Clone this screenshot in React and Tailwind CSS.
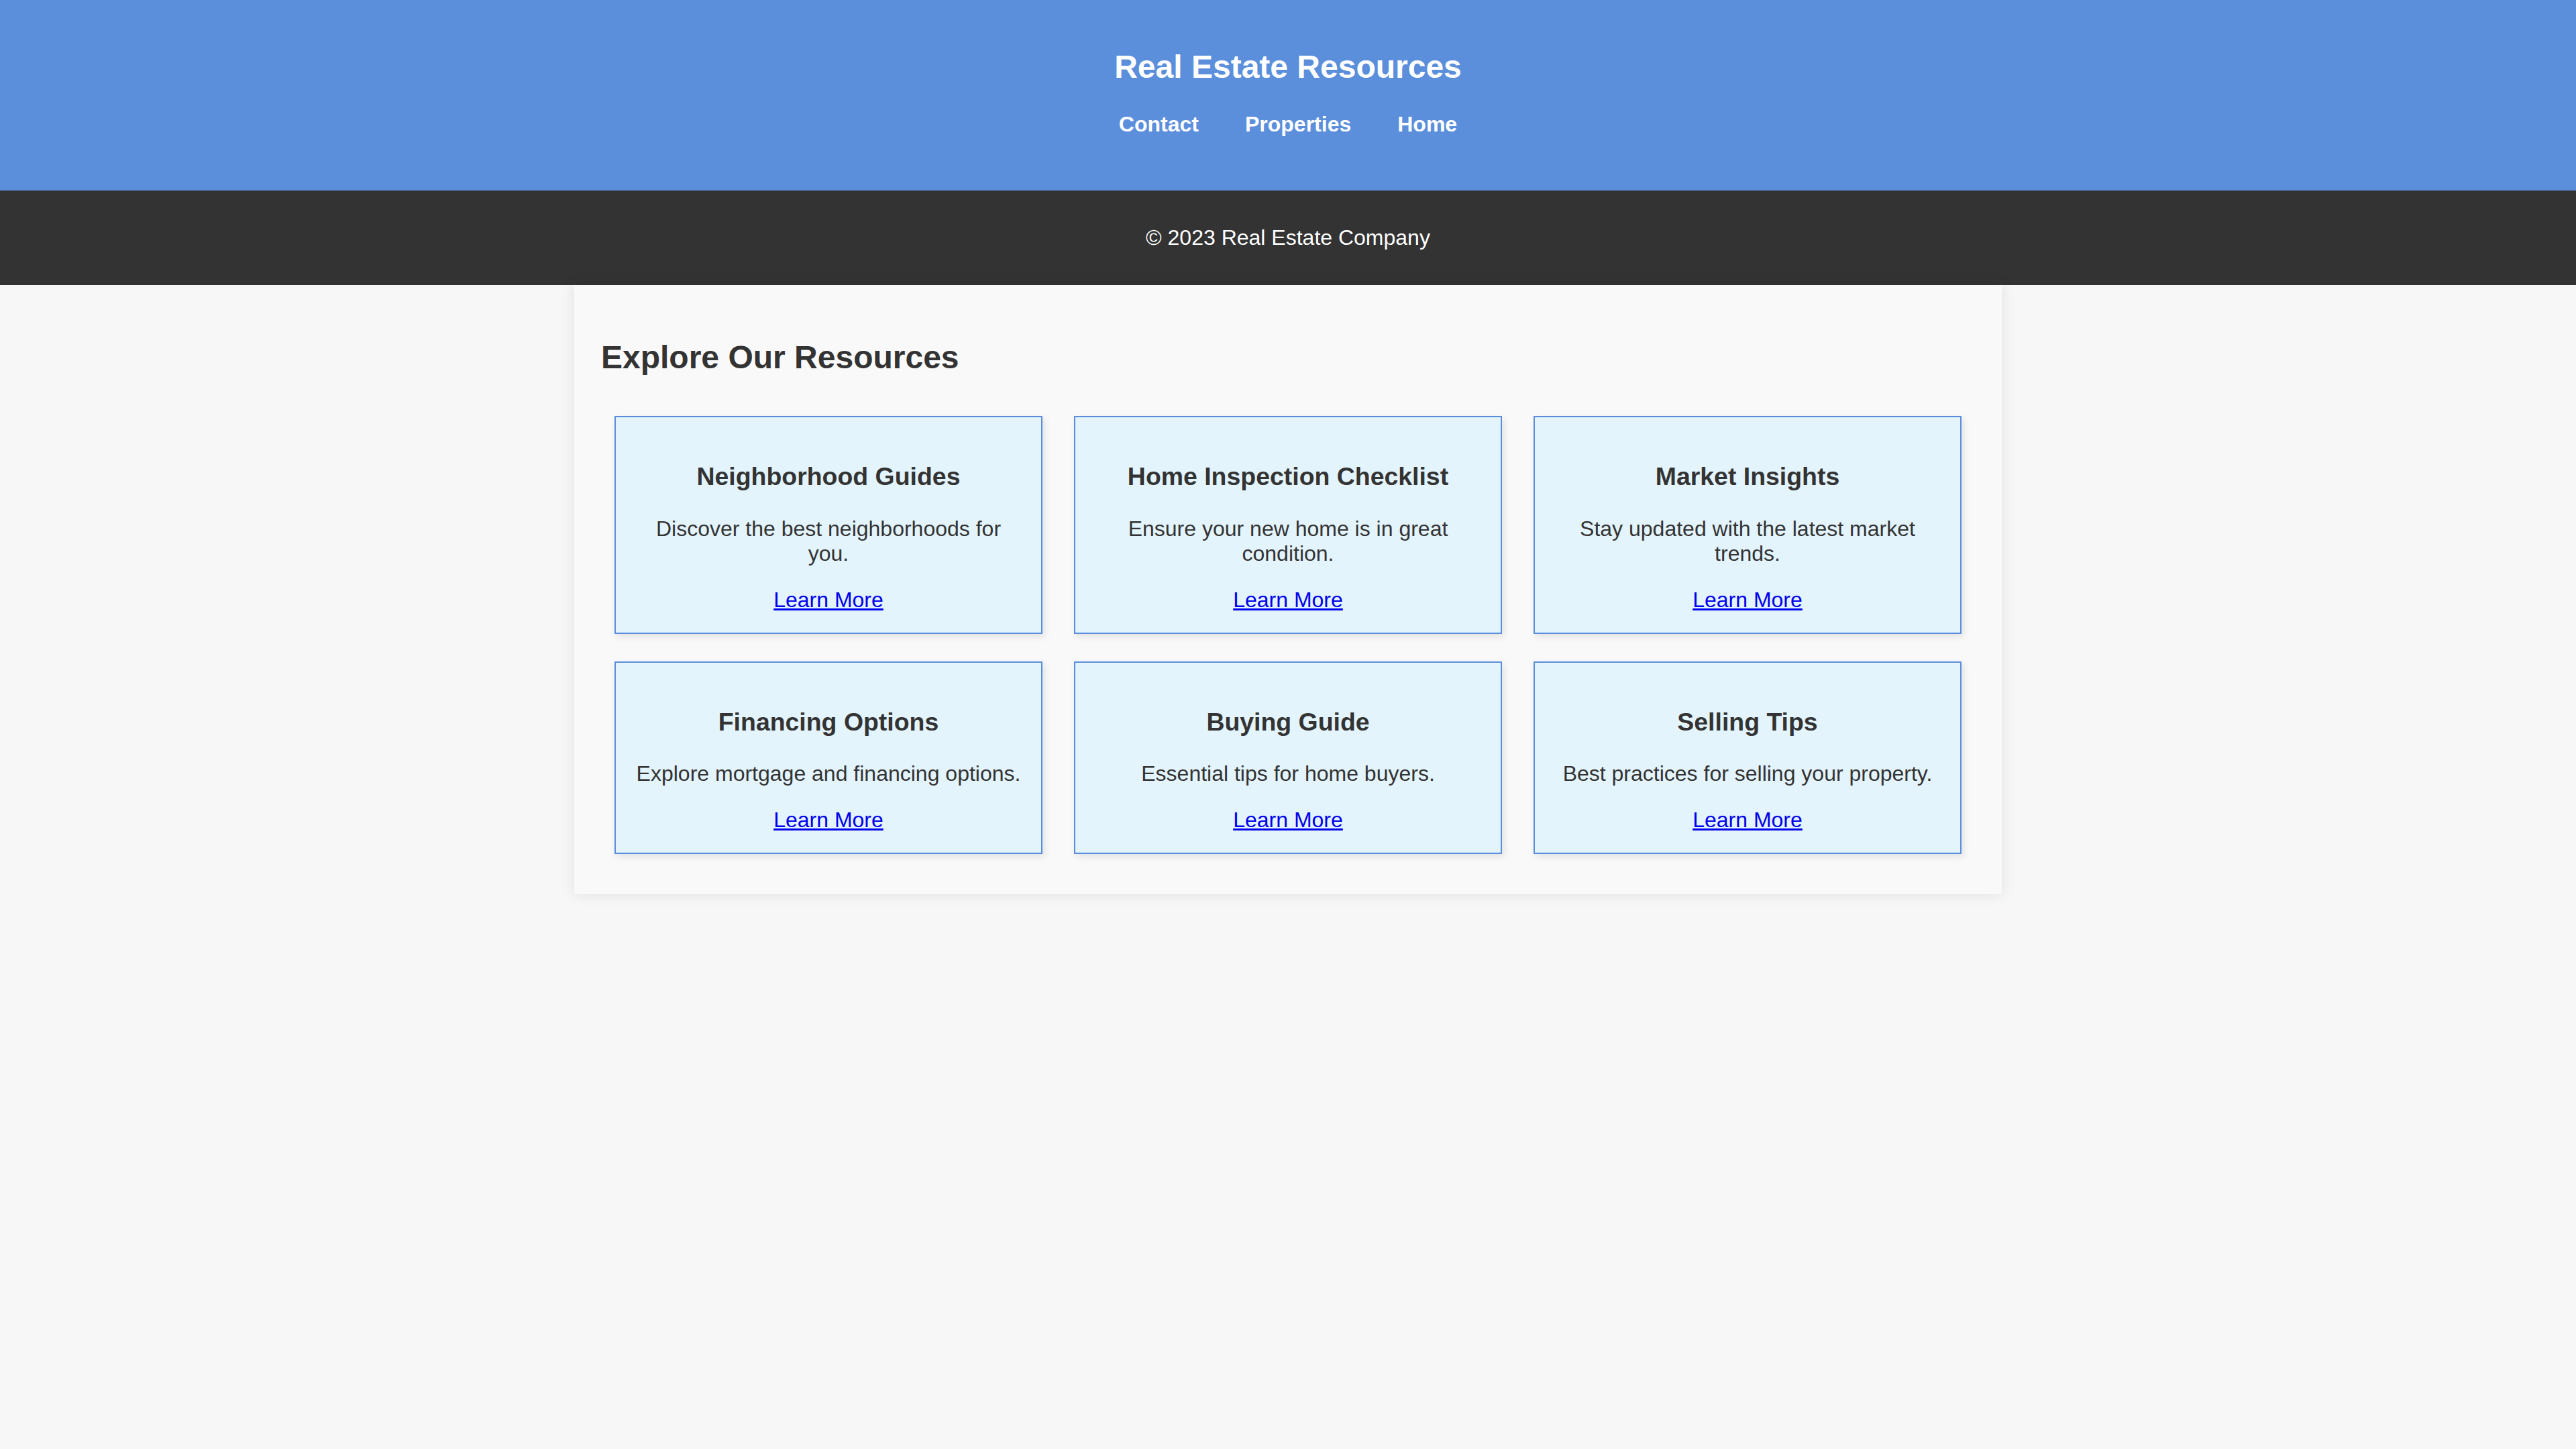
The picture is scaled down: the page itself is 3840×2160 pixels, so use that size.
import React from 'react';

const resources = [
  { title: 'Neighborhood Guides', text: 'Discover the best neighborhoods for you.' },
  { title: 'Home Inspection Checklist', text: 'Ensure your new home is in great condition.' },
  { title: 'Market Insights', text: 'Stay updated with the latest market trends.' },
  { title: 'Financing Options', text: 'Explore mortgage and financing options.' },
  { title: 'Buying Guide', text: 'Essential tips for home buyers.' },
  { title: 'Selling Tips', text: 'Best practices for selling your property.' },
];

const ResourceCard = ({ title, text }) => {
  return (
    <div className="border-2 border-[#5b8fdc] bg-[#e3f4fd] p-[30px] text-center shadow-[3px_4px_10px_rgba(0,0,0,0.1)]">
      <h3 className="mt-[37.44px] mb-[37.44px] text-[37.44px] font-bold leading-[normal] text-[#333]">{title}</h3>
      <p className="mb-[32px] text-[32px] leading-[normal] text-[#333]">{text}</p>
      <a href="#" className="text-[32px] leading-[normal] text-[#0000ee] underline">Learn More</a>
    </div>
  );
};

const App = () => {
  return (
    <div className="min-h-screen bg-[#f7f7f7] font-['Liberation_Sans',Arial,sans-serif] text-[#333]">
      <header className="h-[284px] bg-[#5b8fdc] pt-[40px] text-center text-white">
        <h1 className="mt-[32px] text-[48px] font-bold leading-[normal]">Real Estate Resources</h1>
        <nav className="mt-[40px] flex justify-center gap-[69px] text-[32px] font-bold leading-[normal]">
          <a href="#">Contact</a>
          <a href="#">Properties</a>
          <a href="#">Home</a>
        </nav>
      </header>

      <footer className="flex h-[141px] items-center justify-center bg-[#333] text-[32px] leading-[normal] text-white">
        <p>© 2023 Real Estate Company</p>
      </footer>

      <main className="mx-auto w-[2128px] bg-[#f9f9f9] px-[40px] pt-[40px] pb-[40px] shadow-[0_0_20px_rgba(0,0,0,0.1)]">
        <h2 className="mt-[39.84px] mb-[39.84px] text-[48px] font-bold leading-[normal] text-[#333]">Explore Our Resources</h2>
        <div className="grid grid-cols-3 gap-x-[47px] gap-y-[41px] p-[20px]">
          {resources.map((r) => (
            <ResourceCard key={r.title} title={r.title} text={r.text} />
          ))}
        </div>
      </main>
    </div>
  );
};

export default App;
